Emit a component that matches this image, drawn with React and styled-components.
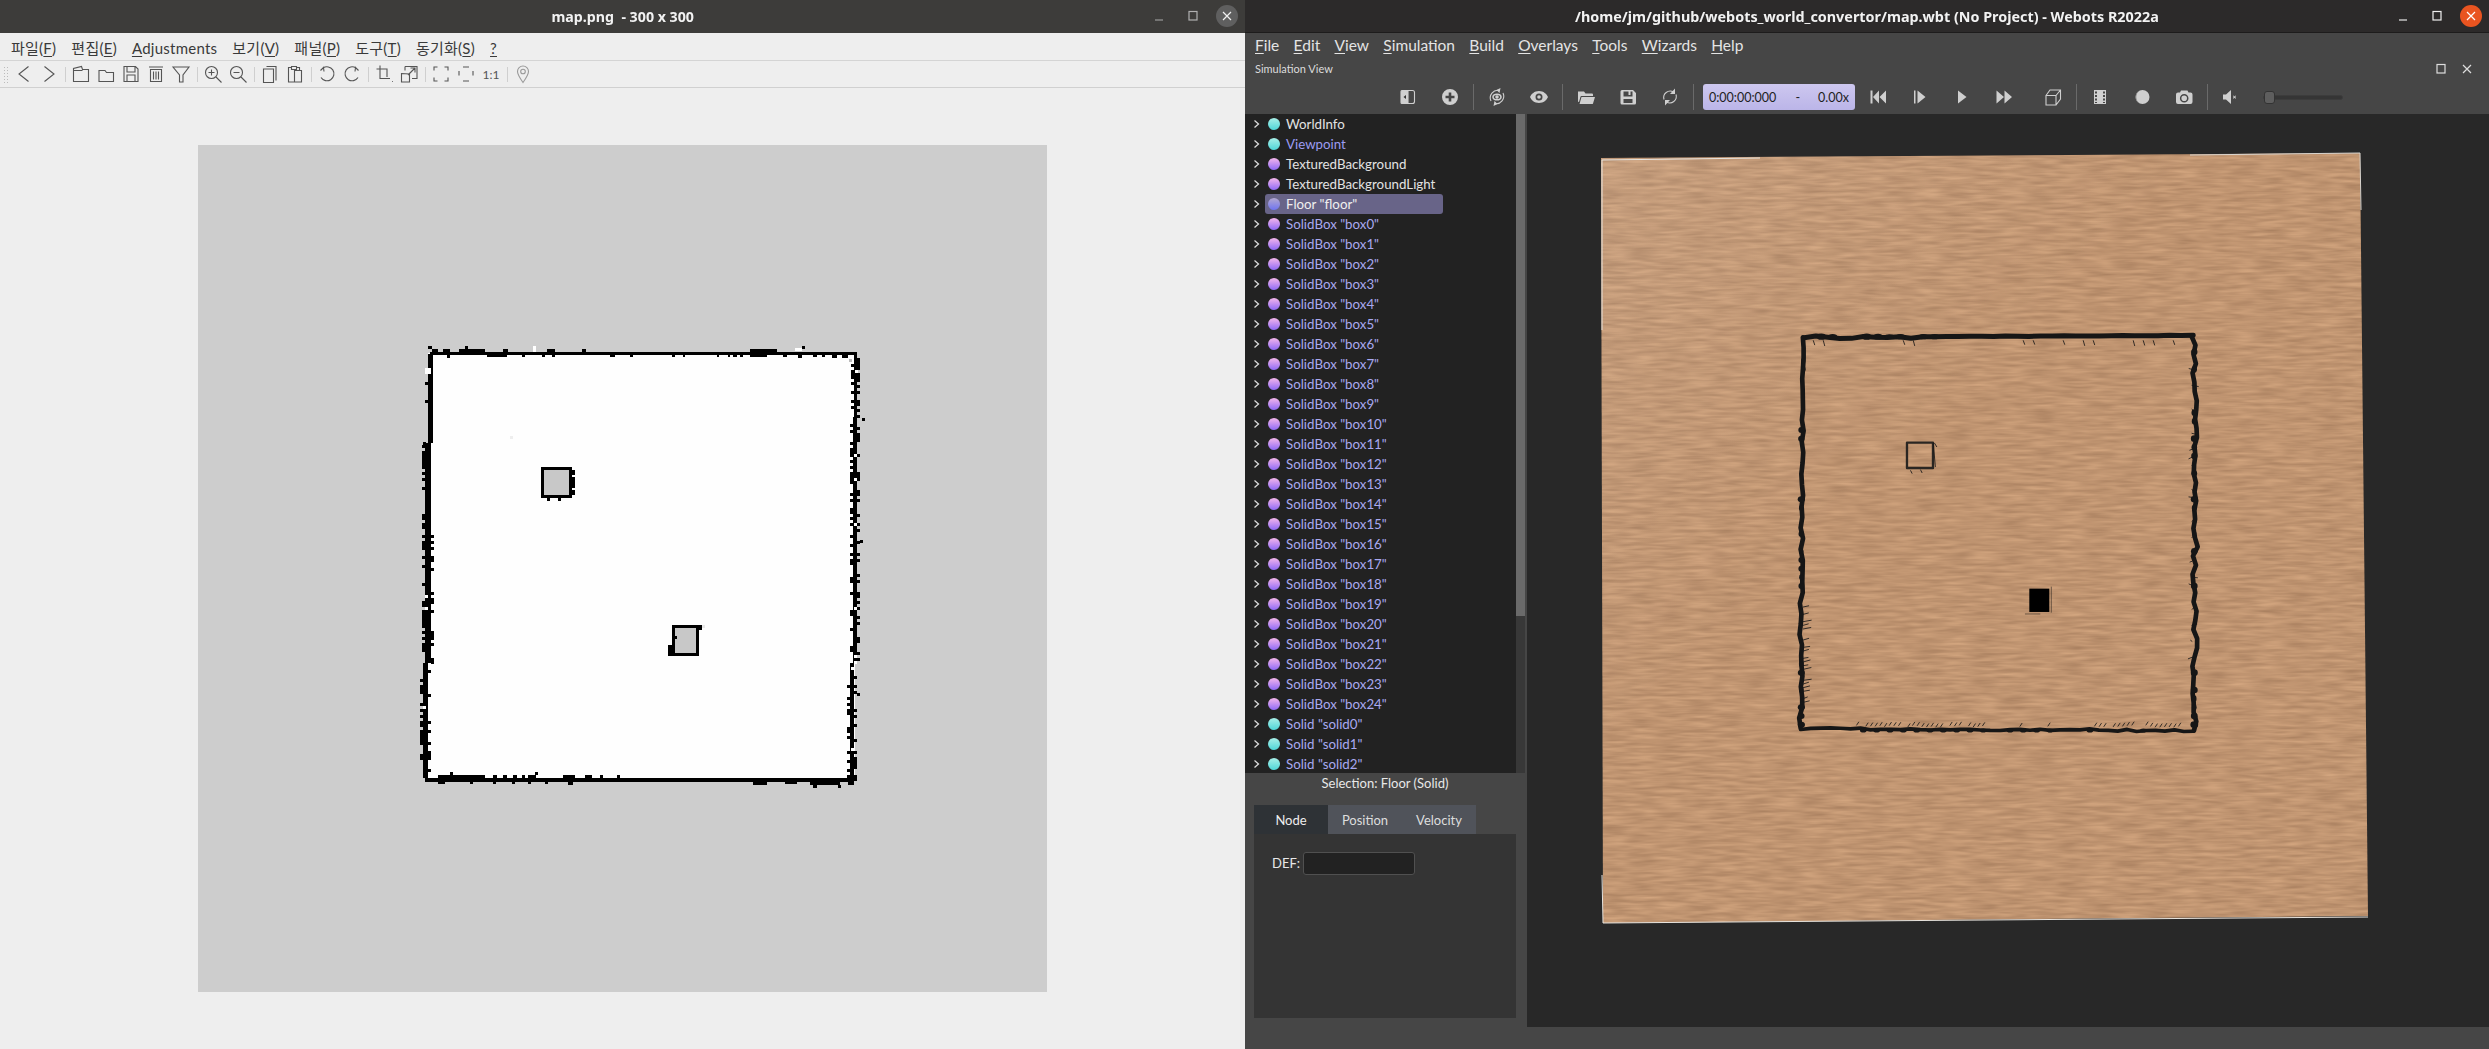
import React from "react";
import styled, { createGlobalStyle } from "styled-components";

const UI = `"Lato", "Noto Sans CJK KR", sans-serif`;

const Global = createGlobalStyle`
  html, body { margin: 0; padding: 0; width: 2489px; height: 1049px; overflow: hidden; background: #eee; }
  * { box-sizing: border-box; }
`;

function rng(seed) {
  let a = seed;
  return () => {
    a |= 0; a = (a + 0x6d2b79f5) | 0;
    let t = Math.imul(a ^ (a >>> 15), 1 | a);
    t = (t + Math.imul(t ^ (t >>> 7), 61 | t)) ^ t;
    return ((t ^ (t >>> 14)) >>> 0) / 4294967296;
  };
}

/* ---------- layout ---------- */
const Desktop = styled.div`
  display: flex; width: 2489px; height: 1049px; font-family: ${UI};
`;
const ViewerWindow = styled.div`
  width: 1245px; height: 1049px; display: flex; flex-direction: column; background: #eeeeee;
`;
const WebotsWindow = styled.div`
  width: 1244px; height: 1049px; display: flex; flex-direction: column; background: #464646;
`;
const TitleBar = styled.div`
  position: relative; height: 33px; flex: none; display: flex; align-items: center; justify-content: center;
  background: ${p => (p.$dark ? "#2c2a2a" : "#3d3c3a")};
  border-bottom: 1px solid ${p => (p.$dark ? "#1d1c1c" : "#3d3c3a")};
`;
const TitleText = styled.div`
  color: #f2f2f2; font: 700 14.5px "Noto Sans", sans-serif; white-space: pre; transform: scaleX(${p => p.$sx || 1});
`;
const WinControls = styled.div`
  position: absolute; right: 7px; top: 5px; display: flex; align-items: center; gap: 12px; height: 22px;
`;
const WinBtn = styled.div`
  width: 22px; height: 22px; display: flex; align-items: center; justify-content: center; border-radius: 50%;
  background: ${p => p.$bg || "transparent"};
`;

/* ---------- viewer (left) ---------- */
const ViewerMenu = styled.div`
  height: 28px; flex: none; display: flex; align-items: center; gap: 15px; padding: 2px 0 0 11px;
  color: #3a3a3a; font-size: 15px; letter-spacing: 0.25px; border-bottom: 1px solid #d4d4d4;
`;
const MenuItem = styled.span`white-space: nowrap;`;
const Key = styled.u`text-underline-offset: 2px;`;
const ViewerTools = styled.div`
  position: relative; height: 27px; flex: none; display: flex; align-items: center; padding-left: 11.5px;
  border-bottom: 1px solid #d0d0d0; color: #555;
`;
const Grip = styled.div`
  position: absolute; left: 3px; top: 5px; width: 5px; height: 17px;
  background-image: radial-gradient(#bbb 0.8px, transparent 1px); background-size: 3px 3px;
`;
const ToolBtn = styled.div`
  width: 25px; height: 26px; display: flex; align-items: center; justify-content: center; flex: none;
  color: ${p => p.$c || "#555"}; font-size: 12px;
`;
const ToolSep = styled.div`
  width: 1px; height: 15px; margin: 0 3px; background: #cfcfcf; flex: none;
`;
const Canvas = styled.div`
  flex: 1; display: flex; align-items: center; justify-content: center;
`;
const LineIcon = styled.svg`
  width: 20px; height: 20px; fill: none; stroke: currentColor; stroke-width: 1.1;
`;

/* ---------- webots (right) ---------- */
const WebotsMenu = styled.div`
  height: 24px; flex: none; display: flex; align-items: center; gap: 14.3px; padding: 0 0 1px 10px;
  color: #e4e4e4; font-size: 15.5px;
`;
const DockTitle = styled.div`
  position: relative; height: 23px; flex: none; display: flex; align-items: center; padding-left: 10px;
  font-size: 11px; color: #dcdcdc;
`;
const DockBtns = styled.div`
  position: absolute; right: 15px; top: 5px; display: flex; gap: 12px; color: #ddd;
`;
const WebotsTools = styled.div`
  height: 34px; flex: none; display: flex; align-items: center; padding-left: 142px; color: #cfcfcf;
`;
const SimBtn = styled.div`
  width: 42px; height: 30px; flex: none; display: flex; align-items: center; justify-content: center;
  margin-left: ${p => p.$ml || 0}px;
`;
const SimSep = styled.div`
  width: 1px; height: 26px; flex: none; margin: 0 2px; background: #6a6a6a;
`;
const SolidIcon = styled.svg`
  width: 20px; height: 20px; fill: currentColor;
`;
const TimeBox = styled.div`
  width: 152px; height: 26px; flex: none; margin: 0 2px 0 7px; padding: 0 6px; border-radius: 3px;
  display: flex; align-items: center; justify-content: space-between;
  background: linear-gradient(#cdc7ef, #bbb5e8); color: #1e1e1e; font-size: 12.5px;
`;
const TimeRate = styled.span`display: flex; gap: 18px; `;
const SliderTrack = styled.div`
  position: relative; width: 80px; height: 5px; margin-left: 11px; border-radius: 3px;
  background: #353535; border: 1px solid #3c3c3c;
`;
const SliderKnob = styled.div`
  position: absolute; left: 0; top: -5px; width: 11px; height: 13px; border-radius: 3px;
  background: #5e5e5e; border: 1px solid #333;
`;
const Body = styled.div`
  height: 913px; flex: none; display: flex;
`;
const Dock = styled.div`
  width: 282px; flex: none; display: flex; flex-direction: column;
`;
const TreeWrap = styled.div`
  height: 659px; flex: none; display: flex;
`;
const Tree = styled.div`
  width: 271px; flex: none; background: #222222; overflow: hidden;
`;
const Scroll = styled.div`
  width: 9px; flex: none; background: #383838;
`;
const ScrollThumb = styled.div`
  height: 502px; background: #6a6a6a;
`;
const Row = styled.div`
  height: 20px; display: flex; align-items: center; padding-left: 8px; font-size: 13.3px; white-space: nowrap;
  color: ${p => p.$c};
`;
const Chevron = styled.svg`
  width: 7px; height: 8px; flex: none; fill: none; stroke: #dcdcdc; stroke-width: 1.3; margin-right: 5px;
`;
const RowBody = styled.div`
  height: 20px; display: flex; align-items: center; gap: 6px; padding: 0 0 0 3px; width: 178px; border-radius: 3px;
  background: ${p => (p.$on ? "#686488" : "transparent")};
`;
const Ball = styled.span`
  width: 12px; height: 12px; border-radius: 50%; flex: none; background: ${p => p.$g};
`;
const SelLabel = styled.div`
  height: 32px; flex: none; text-align: center; line-height: 20px; font-size: 13px; color: #e8e8e8; padding-right: 2px;
`;
const Tabs = styled.div`
  display: flex; margin-left: 9px; height: 29px; flex: none;
`;
const Tab = styled.div`
  width: 74px; display: flex; align-items: center; justify-content: center; font-size: 13px;
  background: ${p => (p.$on ? "#2e3236" : "#50535a")}; color: ${p => (p.$on ? "#eee" : "#ddd")};
`;
const TabPanel = styled.div`
  margin-left: 9px; width: 262px; height: 184px; flex: none; background: #343434; padding: 18px 0 0 18px;
  display: flex; align-items: flex-start; gap: 3px; color: #e8e8e8; font-size: 13px;
`;
const DefLabel = styled.span`line-height: 23px;`;
const DefInput = styled.div`
  width: 112px; height: 23px; background: #222; border: 1px solid #505050; border-radius: 3px;
`;
const View3D = styled.div`
  width: 962px; flex: none; background: #282828; overflow: hidden;
`;
const Drawing = styled.svg`display: block;`;

/* ---------- map drawing ---------- */
function rectPath(list) {
  return list.map(([x, y, w, h]) => `M${x} ${y}h${w}v${h}h${-w}z`).join("");
}
const wall = [
  [90, 65, 1280, 10], [75, 1345, 1288, 10],
  [85, 72, 15, 268], [75, 340, 17, 660], [68, 1000, 17, 345],
  [1362, 70, 8, 190], [1360, 260, 12, 740], [1350, 1000, 12, 355],
  [85,47,10,9],[95,56,20,9],[130,56,20,9],[178,56,77,9],[195,47,10,9],[310,56,15,9],[440,56,25,9],[545,56,13,9],[1050,56,80,9],[1205,47,10,9],
  [140,75,10,9],[260,75,60,6],[365,75,10,6],[425,75,10,6],[455,75,10,6],[630,75,15,6],[690,75,9,6],[815,75,10,6],[850,75,6,6],[950,75,6,6],[985,75,6,6],[1000,75,10,6],[1020,75,10,6],[1050,75,50,6],[1150,75,10,6],[1195,75,10,9],[1240,75,10,6],[1265,75,10,6],[1295,75,15,9],[1325,75,20,9],
  [115,1335,140,10],[280,1335,10,10],[310,1335,10,10],[340,1335,10,10],[365,1335,10,10],[405,1327,10,9],[385,1335,22,10],[490,1335,35,10],[555,1335,20,10],[600,1335,10,10],[650,1335,10,10],[150,1327,10,9],
  [115,1355,20,7],[210,1355,9,7],[280,1355,9,7],[335,1355,9,7],[385,1355,9,7],[435,1355,9,7],[505,1355,15,10],[1060,1355,40,9],[1155,1355,35,7],[1230,1355,70,9],[1240,1364,10,9],[1300,1355,20,9],[1315,1364,9,9],[1345,1355,18,9],
  [1385,265,9,9],[1380,630,9,9],[1370,1090,9,9],[60,1183,9,9],[68,335,9,9],
];
const holes = [[75,115,17,18],[400,47,8,18],[1185,54,20,9]];
const r = rng(42);
for (let y = 75; y < 1345; y += 9) {
  const lx = y < 340 ? 85 : y < 1000 ? 75 : 68;
  const lw = y < 340 ? 15 : 17;
  if (r() < (y < 340 ? 0.12 : 0.45)) wall.push([lx - 9, y, 9, 9]);
  if (y > 600 && r() < 0.4) wall.push([lx + lw, y, 9, 9]);
  const rx = y < 260 ? 1362 : y < 1000 ? 1360 : 1350;
  const rw = y < 260 ? 8 : 12;
  if (r() < 0.4) wall.push([rx - 9, y, 9, 9]);
  if (r() < 0.4) wall.push([rx + rw, y, 9, 9]);
  if (y > 700 && r() < 0.06) holes.push([lx, y, 9, 9]);
  if (r() < 0.05) holes.push([rx + 3, y, 9, 9]);
}
const box1 = [[423,412,92,9],[423,494,92,9],[423,412,9,91],[507,412,9,91],[516,420,9,15],[507,440,18,35],[507,480,18,15],[440,503,10,9],[473,503,10,9]];
const box2 = [[815,885,90,9],[815,968,81,9],[815,885,9,92],[887,885,9,92],[896,885,9,15],[805,945,10,32],[824,918,8,9]];

const MapImage = () => (
  <Drawing width="849" height="847" viewBox="-606 -555 2547 2541" shapeRendering="crispEdges">
    <rect x="-606" y="-555" width="2547" height="2541" fill="#cdcdcd" />
    <rect x="85" y="70" width="1280" height="1280" fill="#fefefe" />
    <path d={rectPath(wall)} fill="#000" />
    <path d={rectPath(holes)} fill="#fff" />
    <rect x="430" y="420" width="80" height="76" fill="#c8c8c8" />
    <rect x="822" y="893" width="66" height="76" fill="#c8c8c8" />
    <path d={rectPath(box1)} fill="#000" />
    <path d={rectPath(box2)} fill="#000" />
    <rect x="905" y="885" width="9" height="9" fill="#e8e8e8" />
    <rect x="330" y="318" width="9" height="9" fill="#eee" />
    <rect x="1346" y="86" width="9" height="9" fill="#bbb" />
  </Drawing>
);

/* ---------- 3D floor drawing ---------- */
function jag(pts, step, amp, seed) {
  const rr = rng(seed);
  const out = [];
  for (let i = 0; i < pts.length - 1; i++) {
    const x0 = pts[i][0], y0 = pts[i][1], a = pts[i][2] ?? amp;
    const x1 = pts[i + 1][0], y1 = pts[i + 1][1];
    const len = Math.hypot(x1 - x0, y1 - y0);
    const n = Math.ceil(len / step);
    const nx = -(y1 - y0) / len, ny = (x1 - x0) / len;
    for (let k = 0; k < n; k++) {
      const t = k / n;
      const d = (rr() - 0.5) * 2 * a;
      out.push(`${(x0 + (x1 - x0) * t + nx * d).toFixed(1)},${(y0 + (y1 - y0) * t + ny * d).toFixed(1)}`);
    }
  }
  const l = pts[pts.length - 1];
  out.push(`${l[0]},${l[1]}`);
  return out.join(" ");
}
const ticks = [];
const blobs = [];
const tr = rng(7);
for (let x = 230; x < 1200; x += 14) if (tr() < ((x > 240 && x < 620) || x > 930 ? 0.75 : 0.12)) ticks.push([x, 1245 + tr() * 6, 6, -9]);
for (let x = 100; x < 1230; x += 30) if (tr() < (x < 420 || x > 880 ? 0.6 : 0.15)) ticks.push([x, 92, 4, 10 + tr() * 6]);
for (let y = 880; y < 1180; y += 11) if (tr() < 0.8) ticks.push([70, y, 10 + tr() * 14, -2 - tr() * 4]);
for (let y = 130; y < 1180; y += 24) if (tr() < 0.45) ticks.push([1236, y, -12 + tr() * 34, -5 + tr() * 10]);
for (let y = 100; y < 1250; y += 26) {
  if (tr() < 0.5) blobs.push([y < 330 ? 70 : 64, y, 6 + tr() * 5, 9]);
  if (tr() < 0.6) blobs.push([1243, y, 6 + tr() * 6, 10]);
}
for (let x = 90; x < 500; x += 34) if (tr() < 0.6) blobs.push([x, 80, 14, 7 + tr() * 3]);
for (let x = 90; x < 1230; x += 40) if (tr() < 0.55) blobs.push([x, 1262, 10, 6]);

const Floor = () => (
  <Drawing width="962" height="913" viewBox="1527 114 962 913">
    <defs>
      <filter id="wood" x="0" y="0" width="100%" height="100%" colorInterpolationFilters="sRGB">
        <feTurbulence type="fractalNoise" baseFrequency="0.035 0.3" numOctaves="2" seed="4" />
        <feColorMatrix type="matrix" values="0.2 0 0 0 0.65  0.18 0 0 0 0.49  0.15 0 0 0 0.365  0 0 0 0 1" />
      </filter>
      <clipPath id="floorClip"><polygon points="1601,158 2360,153 2368,916 1603,923" /></clipPath>
      <linearGradient id="sheen" x1="0" y1="0" x2="1" y2="1">
        <stop offset="0" stopColor="#fff" stopOpacity="0.08" />
        <stop offset="0.4" stopColor="#fff" stopOpacity="0" />
      </linearGradient>
    </defs>
    <g clipPath="url(#floorClip)">
      <rect x="1595" y="150" width="780" height="780" filter="url(#wood)" />
      <rect x="1595" y="150" width="780" height="780" fill="url(#sheen)" />
    </g>
    <polyline points="1602,330 1602,160 1760,158" fill="none" stroke="#e8e4de" strokeWidth="1" />
    <polyline points="1602,875 1603,923 2368,917" fill="none" stroke="#e8e4de" strokeWidth="1" />
    <polyline points="2190,155 2360,153 2361,210" fill="none" stroke="#d8d4ce" strokeWidth="1" />
    <g transform="translate(1780 310) scale(0.3333)" fill="none" stroke="#161616" strokeLinejoin="round" strokeLinecap="round">
      <polyline strokeWidth="15" points={jag([[72, 82, 4], [500, 80, 1], [1240, 76]], 36, 4, 1)} />
      <polyline strokeWidth="14" points={jag([[70, 82, 3], [68, 330, 4], [64, 880, 5], [62, 1255]], 34, 5, 2)} />
      <polyline strokeWidth="14" points={jag([[1238, 78, 8], [1246, 300, 6], [1246, 600, 8], [1242, 1262]], 28, 6, 3)} />
      <polyline strokeWidth="11" points={jag([[62, 1256, 3], [900, 1260, 4], [1240, 1264]], 30, 3, 4)} />
      {ticks.map(([x, y, dx, dy], i) => (
        <line key={i} x1={x} y1={y} x2={x + dx} y2={y + dy} strokeWidth="2.5" />
      ))}
      {blobs.map(([cx, cy, rx, ry], i) => (
        <ellipse key={i} cx={cx} cy={cy} rx={rx} ry={ry} fill="#161616" stroke="none" />
      ))}
      <rect x="381" y="398" width="78" height="76" strokeWidth="7" stroke="#2a2622" />
      <path d="M460 400l6 70 M464 400l6 10 M392 482l4 8 M422 480l4 8" strokeWidth="2.5" />
    </g>
    <g transform="translate(1780 310) scale(0.3333)">
      <rect x="748" y="836" width="60" height="70" fill="#000" />
      <path d="M735 912h46 M814 830v78" stroke="#3a2f25" strokeWidth="2" fill="none" />
    </g>
  </Drawing>
);

/* ---------- icons ---------- */
const L = ({ d, children }) => (
  <LineIcon viewBox="0 0 20 20">{d && <path d={d} />}{children}</LineIcon>
);
const S = ({ d, children }) => (
  <SolidIcon viewBox="0 0 20 20">{d && <path d={d} />}{children}</SolidIcon>
);

const WinGlyph = ({ kind, color }) => (
  <svg width="14" height="14" viewBox="0 0 14 14" fill="none" stroke={color} strokeWidth="1.2">
    {kind === "min" && <path d="M3 11h8" />}
    {kind === "max" && <rect x="3" y="2.5" width="8" height="8.5" />}
    {kind === "close" && <path d="M3 3l8 8M11 3l-8 8" />}
  </svg>
);

const names = [
  ["WorldInfo", "c", "#e2e2e2"], ["Viewpoint", "c", "#9c9cf2"], ["TexturedBackground", "p", "#e2e2e2"],
  ["TexturedBackgroundLight", "p", "#e2e2e2"], ['Floor "floor"', "s", "#efefef"],
  ...Array.from({ length: 25 }, (_, i) => [`SolidBox "box${i}"`, "p", "#a9a9f0"]),
  ['Solid "solid0"', "c", "#a9a9f0"], ['Solid "solid1"', "c", "#a9a9f0"], ['Solid "solid2"', "c", "#a9a9f0"],
];
const balls = {
  c: "linear-gradient(#a8efe8, #4fd6d8)",
  p: "linear-gradient(#f5b6ec, #8f6af5)",
  s: "linear-gradient(#b3a8d0, #6f74f0)",
};

const Under = ({ k, rest, pre }) => (
  <MenuItem>{pre}<Key>{k}</Key>{rest}</MenuItem>
);

export default function App() {
  return (
    <Desktop>
      <Global />
      <ViewerWindow>
        <TitleBar>
          <TitleText $sx={0.98}>{"map.png  - 300 x 300"}</TitleText>
          <WinControls>
            <WinBtn><WinGlyph kind="min" color="#9a9a9a" /></WinBtn>
            <WinBtn><WinGlyph kind="max" color="#b0b0b0" /></WinBtn>
            <WinBtn $bg="#5f5f5f"><WinGlyph kind="close" color="#f0f0f0" /></WinBtn>
          </WinControls>
        </TitleBar>
        <ViewerMenu>
          <Under pre="파일(" k="F" rest=")" />
          <Under pre="편집(" k="E" rest=")" />
          <Under k="A" rest="djustments" />
          <Under pre="보기(" k="V" rest=")" />
          <Under pre="패널(" k="P" rest=")" />
          <Under pre="도구(" k="T" rest=")" />
          <Under pre="동기화(" k="S" rest=")" />
          <Under k="?" />
        </ViewerMenu>
        <ViewerTools>
          <Grip />
          <ToolBtn><L d="M14.5 2.5L5 10l9.5 7.5" /></ToolBtn>
          <ToolBtn><L d="M5.5 2.5L15 10l-9.5 7.5" /></ToolBtn>
          <ToolSep />
          <ToolBtn><L d="M2.5 17.5V4.5l8-2 1 3h6v12z M2.5 6.5h9" /></ToolBtn>
          <ToolBtn><L d="M3 17.5V6.5h6l1.5 2h7v9z" /></ToolBtn>
          <ToolBtn><L d="M3 2.5h11.5l2.5 2.5v12.5H3z M6 2.5v5.5h8V2.5 M6 17.5v-6.5h8v6.5" /></ToolBtn>
          <ToolBtn><L d="M3 3h14 M4.5 5.5h11v12h-11z M7.5 7.5v8 M10 7.5v8 M12.5 7.5v8" /></ToolBtn>
          <ToolBtn><L d="M2 3h16l-6 8v7H8.5v-7z" /></ToolBtn>
          <ToolSep />
          <ToolBtn><L d="M8.5 5.5v6 M5.5 8.5h6 M13 13l5.5 5.5"><circle cx="8.5" cy="8.5" r="6" /></L></ToolBtn>
          <ToolBtn><L d="M5.5 8.5h6 M13 13l5.5 5.5"><circle cx="8.5" cy="8.5" r="6" /></L></ToolBtn>
          <ToolSep />
          <ToolBtn><L d="M6.5 2.5h9.5v14 M3.5 5h10v13.5h-10z" /></ToolBtn>
          <ToolBtn><L d="M6.5 3.5h-3v14.5h6 M6.5 2.5h5v3h-5z M11.5 3.5h3v3 M9.5 6.5h7v11.5h-7z" /></ToolBtn>
          <ToolSep />
          <ToolBtn><L d="M3.5 6.5l3-3 .5 4 M6 4a7 7 0 1 1-2 9.5" /></ToolBtn>
          <ToolBtn><L d="M16.5 6.5l-3-3-.5 4 M14 4a7 7 0 1 0 2 9.5" /></ToolBtn>
          <ToolSep />
          <ToolBtn><L d="M6 1.5v13h10 M2.5 5h10.5v8 M14 1.5 M18 17.5h.8" /></ToolBtn>
          <ToolBtn><L d="M2.5 9.5v8.5h8v-8z M6 2.5h12v12h-5 M6 2.5v4 M9 11l7-7 M11.5 4H16v4.5" /></ToolBtn>
          <ToolSep />
          <ToolBtn><L d="M3 6.5V3h3.5 M13.5 3H17v3.5 M3 13.5V17h3.5 M13.5 17H17v-3.5" /></ToolBtn>
          <ToolBtn><L d="M7 3h6 M7 17h6 M3 7v4.5 M17 7v4.5" /></ToolBtn>
          <ToolBtn>1:1</ToolBtn>
          <ToolSep />
          <ToolBtn $c="#9a9a9a"><L d="M10 18.5C6.5 13.5 4.5 10.5 4.5 7.5a5.5 5.5 0 0 1 11 0c0 3-2 6-5.5 11z"><circle cx="10" cy="7.5" r="2.3" /></L></ToolBtn>
        </ViewerTools>
        <Canvas><MapImage /></Canvas>
      </ViewerWindow>

      <WebotsWindow>
        <TitleBar $dark>
          <TitleText $sx={0.99}>/home/jm/github/webots_world_convertor/map.wbt (No Project) - Webots R2022a</TitleText>
          <WinControls>
            <WinBtn><WinGlyph kind="min" color="#e8e8e8" /></WinBtn>
            <WinBtn><WinGlyph kind="max" color="#f0f0f0" /></WinBtn>
            <WinBtn $bg="#e95420"><WinGlyph kind="close" color="#fff" /></WinBtn>
          </WinControls>
        </TitleBar>
        <WebotsMenu>
          <Under k="F" rest="ile" />
          <Under k="E" rest="dit" />
          <Under k="V" rest="iew" />
          <Under k="S" rest="imulation" />
          <Under k="B" rest="uild" />
          <Under k="O" rest="verlays" />
          <Under k="T" rest="ools" />
          <Under k="W" rest="izards" />
          <Under k="H" rest="elp" />
        </WebotsMenu>
        <DockTitle>
          Simulation View
          <DockBtns>
            <WinGlyph kind="max" color="#ddd" />
            <WinGlyph kind="close" color="#ddd" />
          </DockBtns>
        </DockTitle>
        <WebotsTools>
          <SimBtn><L d="M10 3.5h4.5a2 2 0 0 1 2 2v9a2 2 0 0 1-2 2H10"><path d="M4 3.5h6v13H4a1 1 0 0 1-1-1v-11a1 1 0 0 1 1-1z" fill="currentColor" /><path d="M8 8v4l-2.5-2z" fill="#333" stroke="none" /></L></SimBtn>
          <SimBtn><S d="M10 2a8 8 0 1 0 0 16 8 8 0 0 0 0-16zm-1.3 3.5h2.6v3.2h3.2v2.6h-3.2v3.2H8.7v-3.2H5.5V8.7h3.2z" /></SimBtn>
          <SimSep />
          <SimBtn><L d="M4 14a7.5 7.5 0 0 1 8.5-10.5 M16 6a7.5 7.5 0 0 1-8.5 10.5"><path d="M13.5 1l-1 5 -3-3z M6.5 19l1-5 3 3z" fill="currentColor" stroke="none" /><ellipse cx="10" cy="10" rx="4" ry="2.8" strokeWidth="1.6" /><circle cx="10" cy="10" r="1.2" fill="currentColor" /></L></SimBtn>
          <SimBtn><S d="M10 4C5.5 4 2.2 7 1 10c1.2 3 4.5 6 9 6s7.8-3 9-6c-1.2-3-4.500-6-9-6zm0 2.500a3.500 3.500 0 1 1 0 7 3.500 3.500 0 0 1 0-7zm0 1.700a1.800 1.800 0 1 0 0 3.600 1.800 1.800 0 0 0 0-3.600z" /></SimBtn>
          <SimSep />
          <SimBtn><S d="M2 4.500h6l1.500 2H16a1 1 0 0 1 1 1V9H5.500a1 1 0 0 0-1 .800L3 15H2.500A1 1 0 0 1 2 14zM5.500 10H19l-2 6.500a1 1 0 0 1-1 .500H3.500z" /></SimBtn>
          <SimBtn><S d="M4 3h11l3 3v10a1.500 1.500 0 0 1-1.500 1.500h-12.500A1.500 1.500 0 0 1 2.500 16V4.500A1.500 1.500 0 0 1 4 3zm1.500 1.500v5h9v-5h-2v3.500h-2V4.500zM5.500 12v4h9v-4z" /></SimBtn>
          <SimBtn><L d="M4 12.500a6.500 6.500 0 0 1 9.500-7.500 M16 7.500a6.500 6.500 0 0 1-9.500 7.500"><path d="M15 1.500v5.500h-5z M5 18.500V13h5z" fill="currentColor" stroke="none" /></L></SimBtn>
          <SimSep />
          <TimeBox>
            <span>0:00:00:000</span>
            <TimeRate><span>-</span><span>0.00x</span></TimeRate>
          </TimeBox>
          <SimBtn><S d="M2.500 3.500h2v13h-2zM11 3.500v13l-6-6.500zM18 3.500v13l-6.500-6.500z" /></SimBtn>
          <SimBtn><S d="M4 3.500h1.500v13H4zM7.500 3.500l8 6.500-8 6.500z" /></SimBtn>
          <SimBtn><S d="M6 3.500l8.500 6.500L6 16.500z" /></SimBtn>
          <SimBtn><S d="M2.500 3.500L10 10l-7.500 6.500zM10.500 3.500L18 10l-7.500 6.500z" /></SimBtn>
          <SimBtn $ml={7}><L d="M3 8.500h10V18H3z M3 8.500L7 3h10.500v9L13 18 M13 8.500L17.500 3" /></SimBtn>
          <SimSep />
          <SimBtn><S d="M4 3h12v14H4zM5 4.500v2h2v-2zm0 3.500v2h2V8zm0 3.500v2h2v-2zM5 15v1h2v-1zM13 4.500v2h2v-2zm0 3.500v2h2V8zm0 3.500v2h2v-2zm0 3.500v1h2v-1z" /></SimBtn>
          <SimBtn><S><circle cx="10.500" cy="10" r="7" /><path d="M8 3.500A7 7 0 0 0 8 16.500 A7.500 7.500 0 0 1 8 3.500z" fill="#777" /></S></SimBtn>
          <SimBtn><S d="M7 3.500l-1 2H4a2 2 0 0 0-2 2V15a2 2 0 0 0 2 2h12.500a2 2 0 0 0 2-2V7.500a2 2 0 0 0-2-2H14.500l-1-2zM10.200 7a4.300 4.300 0 1 1 0 8.600 4.300 4.300 0 0 1 0-8.600zm0 1.500a2.800 2.800 0 1 0 0 5.600 2.800 2.800 0 0 0 0-5.600z" /></SimBtn>
          <SimSep />
          <SimBtn><S d="M2 7.500h3L10 3v14l-5-4.500H2zM12.500 8.500l1 1 1-1 .6.6-1 1 1 1-.6.6-1-1-1 1-.6-.6 1-1-1-1z" /></SimBtn>
          <SliderTrack><SliderKnob /></SliderTrack>
        </WebotsTools>
        <Body>
          <Dock>
            <TreeWrap>
              <Tree>
                {names.map(([n, b, c], i) => (
                  <Row key={n} $c={c}>
                    <Chevron viewBox="0 0 7 8"><path d="M1.500 .500L5.500 4l-4 3.500" /></Chevron>
                    <RowBody $on={i === 4}>
                      <Ball $g={balls[b]} />
                      <span>{n}</span>
                    </RowBody>
                  </Row>
                ))}
              </Tree>
              <Scroll><ScrollThumb /></Scroll>
            </TreeWrap>
            <SelLabel>Selection: Floor (Solid)</SelLabel>
            <Tabs>
              <Tab $on>Node</Tab>
              <Tab>Position</Tab>
              <Tab>Velocity</Tab>
            </Tabs>
            <TabPanel>
              <DefLabel>DEF:</DefLabel>
              <DefInput />
            </TabPanel>
          </Dock>
          <View3D><Floor /></View3D>
        </Body>
      </WebotsWindow>
    </Desktop>
  );
}
